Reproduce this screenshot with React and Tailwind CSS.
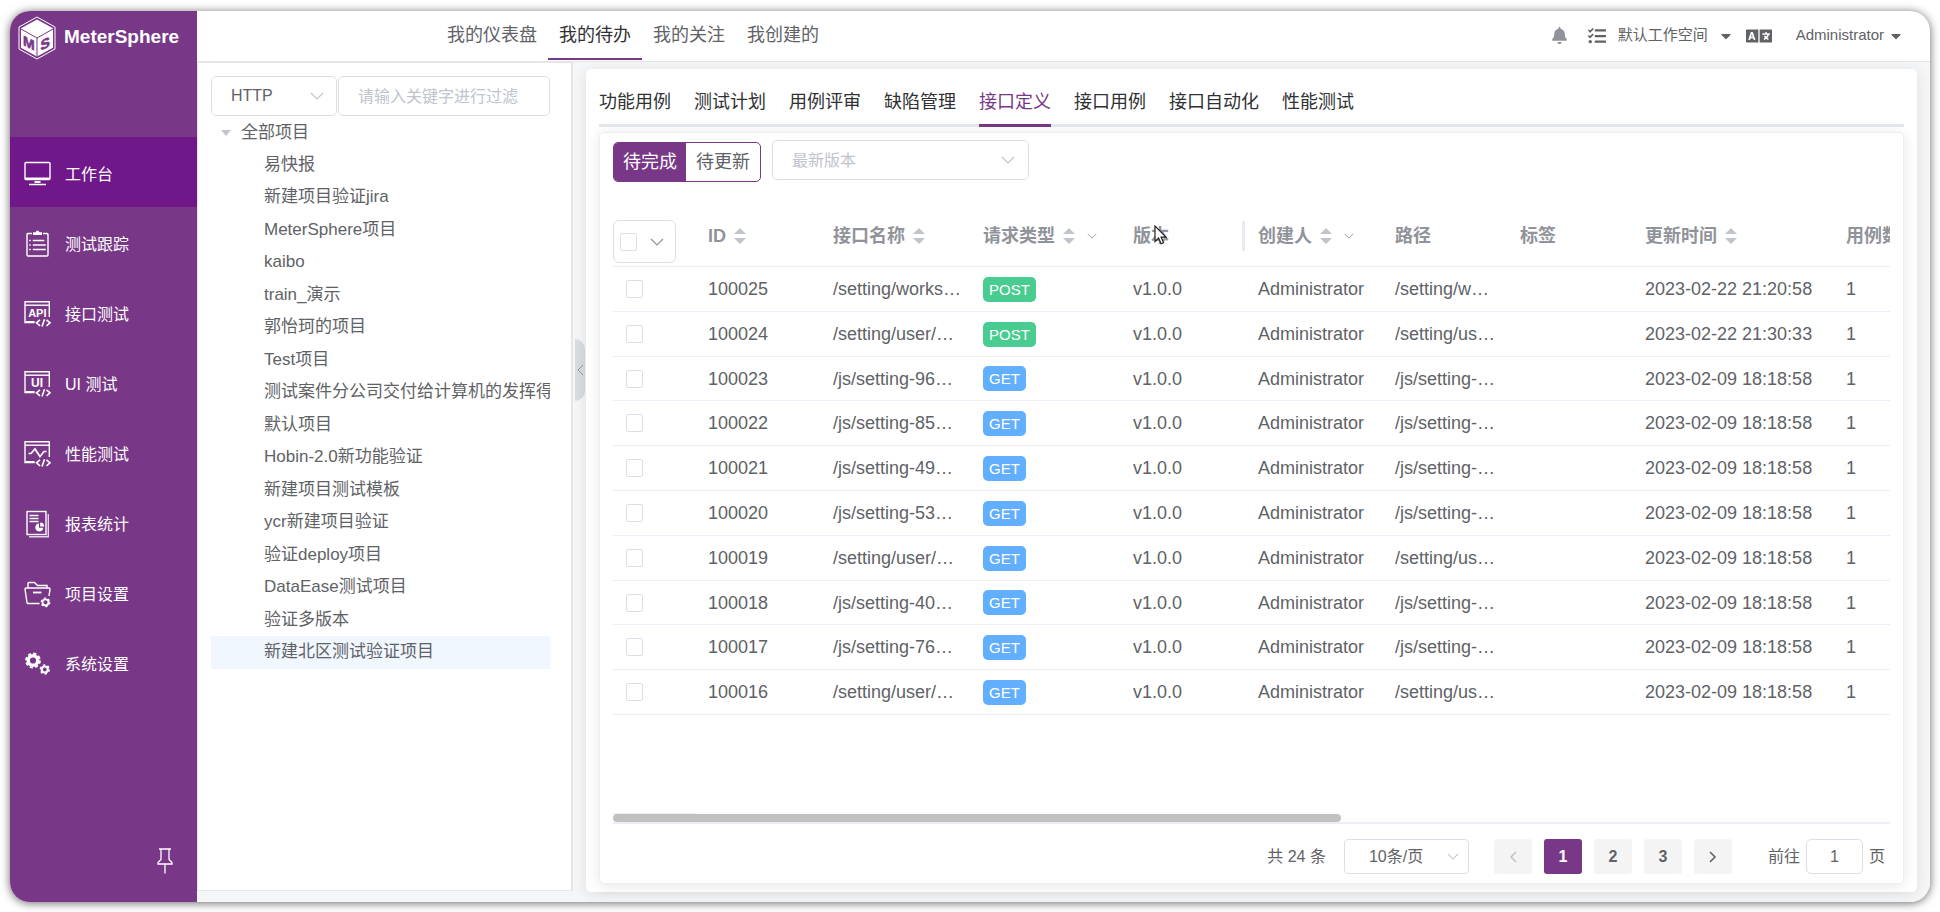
import React, { useState } from "react";
import { FaBell, FaTasks, FaLanguage, FaCaretDown } from "react-icons/fa";

const projects = [
  "易快报",
  "新建项目验证jira",
  "MeterSphere项目",
  "kaibo",
  "train_演示",
  "郭怡珂的项目",
  "Test项目",
  "测试案件分公司交付给计算机的发挥得很好",
  "默认项目",
  "Hobin-2.0新功能验证",
  "新建项目测试模板",
  "ycr新建项目验证",
  "验证deploy项目",
  "DataEase测试项目",
  "验证多版本",
  "新建北区测试验证项目",
];

const rows = [
  { id: "100025", name: "/setting/works…", method: "POST", path: "/setting/w…", time: "2023-02-22 21:20:58" },
  { id: "100024", name: "/setting/user/…", method: "POST", path: "/setting/us…", time: "2023-02-22 21:30:33" },
  { id: "100023", name: "/js/setting-96…", method: "GET", path: "/js/setting-…", time: "2023-02-09 18:18:58" },
  { id: "100022", name: "/js/setting-85…", method: "GET", path: "/js/setting-…", time: "2023-02-09 18:18:58" },
  { id: "100021", name: "/js/setting-49…", method: "GET", path: "/js/setting-…", time: "2023-02-09 18:18:58" },
  { id: "100020", name: "/js/setting-53…", method: "GET", path: "/js/setting-…", time: "2023-02-09 18:18:58" },
  { id: "100019", name: "/setting/user/…", method: "GET", path: "/setting/us…", time: "2023-02-09 18:18:58" },
  { id: "100018", name: "/js/setting-40…", method: "GET", path: "/js/setting-…", time: "2023-02-09 18:18:58" },
  { id: "100017", name: "/js/setting-76…", method: "GET", path: "/js/setting-…", time: "2023-02-09 18:18:58" },
  { id: "100016", name: "/setting/user/…", method: "GET", path: "/setting/us…", time: "2023-02-09 18:18:58" },
];

const methodColors = {
  POST: "bg-[#49cc90]",
  GET: "bg-[#61affe]",
};

/* ---------- icons ---------- */

function Icon({ children }) {
  return (
    <svg
      viewBox="0 0 28 28"
      className="h-7 w-7 shrink-0"
      fill="none"
      stroke="currentColor"
      strokeWidth="1.4"
      aria-hidden="true"
    >
      {children}
    </svg>
  );
}

const MonitorIcon = () => (
  <Icon>
    <rect x="2" y="2.5" width="25" height="17" rx="1" />
    <path d="M2 18.8h25" strokeWidth="2.4" />
    <path d="M11.5 22h6" strokeWidth="2" />
    <path d="M6 24.5h17" />
  </Icon>
);

const ClipboardIcon = () => (
  <Icon>
    <path d="M9 3.5H5a1 1 0 0 0-1 1V25a1 1 0 0 0 1 1h19a1 1 0 0 0 1-1V4.5a1 1 0 0 0-1-1h-4" />
    <path d="M10 2.2h2.5L13.5.8h2l1 1.4H19V5h-9z" fill="currentColor" stroke="none" />
    <path d="M9.8 10.5h11.5M9.8 15h13M9.8 19.5h13M6.2 10.5h1.5M6.2 15h1.5M6.2 19.5h1.5" />
  </Icon>
);

function CodeWindow({ children }) {
  return (
    <Icon>
      <path d="M26.3 17V1.7H2V22.5h9.5" />
      <path d="M2 5.2h24.3" />
      <path d="M3 22h8.5" strokeWidth="2" />
      <path d="M17 19.8l-3.5 3 3.5 3M23.5 19.8l3.5 3-3.5 3M21.5 19.2l-2.5 7.2" strokeWidth="1.6" />
      {children}
    </Icon>
  );
}

const ApiIcon = () => (
  <CodeWindow>
    <text x="14.3" y="16.5" textAnchor="middle" fontSize="11" fontWeight="bold" fill="currentColor" stroke="none">
      API
    </text>
  </CodeWindow>
);

const UiIcon = () => (
  <CodeWindow>
    <text x="14" y="17" textAnchor="middle" fontSize="12" fontWeight="bold" fill="currentColor" stroke="none">
      UI
    </text>
  </CodeWindow>
);

const PerformanceIcon = () => (
  <CodeWindow>
    <path d="M5.5 13.5h2.5l4-4.5 5 7.5 4-5h2.5" strokeWidth="1.7" />
  </CodeWindow>
);

const ReportIcon = () => (
  <Icon>
    <rect x="4" y="1.5" width="19" height="23" />
    <path d="M25.3 4v22.8H6" opacity="0.8" />
    <path d="M6.5 5.5h9M6.5 8.5h9M6.5 11.5h9" strokeWidth="1.3" />
    <path d="M16 13.5a4 4 0 1 0 4.3 4.3H16z" fill="currentColor" stroke="none" />
    <path d="M17.2 12.6v4h4a4 4 0 0 0-4-4z" fill="currentColor" stroke="none" />
  </Icon>
);

const FolderIcon = () => (
  <Icon>
    <path d="M5 8V3.5a1 1 0 0 1 1-1h5.5l3 3H24V8" />
    <path d="M16.5 23.5H5a1 1 0 0 1-1-1L2 9a1 1 0 0 1 1-1h23a1 1 0 0 1 1 1l-1 7" />
    <path d="M10 12.5h8.5" strokeWidth="1.8" />
    <circle cx="22.5" cy="22.3" r="3" strokeWidth="1.8" />
    <circle cx="22.5" cy="22.3" r="4.2" strokeWidth="1.4" strokeDasharray="2.2 2.2" />
  </Icon>
);

const GearsIcon = () => (
  <Icon>
    <circle cx="10" cy="10.5" r="4.8" strokeWidth="3.4" />
    <circle cx="10" cy="10.5" r="7" strokeWidth="1.8" strokeDasharray="3.3 2.2" />
    <circle cx="21.8" cy="19.5" r="3" strokeWidth="2.2" />
    <circle cx="21.8" cy="19.5" r="4.5" strokeWidth="1.4" strokeDasharray="2.35 2.35" />
  </Icon>
);

function Logo() {
  return (
    <svg viewBox="0 0 38 44" className="h-11 w-[38px] shrink-0" aria-hidden="true">
      <path d="M19 1L37 11V33L19 43L1 33V11Z" fill="none" stroke="#fff" strokeWidth="1" />
      <path d="M19 3.5L35 12.3V31.7L19 40.5L3 31.7V12.3Z" fill="#fff" />
      <path d="M3 13L19 22L35 13M19 22V40.5" fill="none" stroke="#783887" strokeWidth="1" />
      <g fill="#783887" stroke="#783887" strokeWidth="0.6" fontSize="14" fontWeight="bold" textAnchor="middle">
        <text transform="matrix(1 0.5 0 1 10.8 32)">M</text>
        <text transform="matrix(1 -0.5 0 1 27.2 32.5)">S</text>
      </g>
    </svg>
  );
}

function Chevron({ className }) {
  return (
    <svg viewBox="0 0 14 8" className={className} fill="none" stroke="currentColor" strokeWidth="1.2" aria-hidden="true">
      <path d="M1 1l6 6 6-6" />
    </svg>
  );
}

function SortCaret() {
  return (
    <svg viewBox="0 0 12 16" className="h-4 w-3 shrink-0" fill="#c0c4cc" aria-hidden="true">
      <path d="M6 0l6 6H0zM6 16l6-6H0z" />
    </svg>
  );
}

/* ---------- layout parts ---------- */

const menu = [
  { label: "工作台", icon: MonitorIcon },
  { label: "测试跟踪", icon: ClipboardIcon },
  { label: "接口测试", icon: ApiIcon },
  { label: "UI 测试", icon: UiIcon },
  { label: "性能测试", icon: PerformanceIcon },
  { label: "报表统计", icon: ReportIcon },
  { label: "项目设置", icon: FolderIcon },
  { label: "系统设置", icon: GearsIcon },
];

function Sidebar() {
  return (
    <aside className="flex w-[187px] shrink-0 flex-col bg-[#783887] text-white">
      <div className="flex h-[126px] items-start gap-2 pt-[5px] pl-2">
        <Logo />
        <span className="text-[19px] leading-[42px] font-bold">MeterSphere</span>
      </div>
      <nav aria-label="主菜单">
        {menu.map(({ label, icon: ItemIcon }, i) => (
          <a
            key={label}
            href="#"
            className={`flex h-[70px] items-center gap-3.5 pt-[3px] pl-[13px] text-base ${
              i === 0 ? "bg-[#70178a]" : ""
            }`}
          >
            <ItemIcon />
            <span className="pt-0.5">{label}</span>
          </a>
        ))}
      </nav>
      <button type="button" aria-label="固定菜单" className="mt-auto mr-6 mb-7 self-end">
        <svg viewBox="0 0 16 26" className="h-[26px] w-4" fill="none" stroke="currentColor" strokeWidth="1.3">
          <path d="M2 1h12M4 1v10.5L1 14.5v1.5h14v-1.5l-3-3V1M8 16v9.5" />
        </svg>
      </button>
    </aside>
  );
}

function Header() {
  const links = ["我的仪表盘", "我的待办", "我的关注", "我创建的"];
  return (
    <header className="flex h-[51px] shrink-0 items-stretch justify-between border-b border-[#e6e6e6] pr-[26px] pl-[239px]">
      <nav className="flex text-lg leading-[49px] text-[#606266]" aria-label="工作台">
        {links.map((link) => (
          <a
            key={link}
            href="#"
            className={`h-[49px] px-[11px] ${
              link === "我的待办" ? "border-b-2 border-[#783887] text-[#303133]" : ""
            }`}
          >
            {link}
          </a>
        ))}
      </nav>
      <div className="flex h-[49px] items-center text-[15px] text-[#606266]">
        <button type="button" aria-label="通知" className="mr-5 text-[#909399]">
          <FaBell size={17} />
        </button>
        <button type="button" aria-label="任务" className="mr-3">
          <FaTasks size={18} />
        </button>
        <button type="button" className="flex items-center gap-2.5">
          默认工作空间
          <FaCaretDown size={16} />
        </button>
        <button type="button" aria-label="语言" className="mr-6 ml-3">
          <FaLanguage size={26} />
        </button>
        <button type="button" className="flex items-center gap-1">
          Administrator
          <FaCaretDown size={16} />
        </button>
      </div>
    </header>
  );
}

function ProjectPanel() {
  return (
    <section
      aria-label="项目列表"
      className="mb-[11px] w-[376px] shrink-0 border border-r-2 border-[#e4e6e9] bg-white pt-[13px] pr-[21px] pl-[13px]"
    >
      <div className="flex gap-px">
        <div className="relative w-[126px] shrink-0">
          <select
            aria-label="协议"
            className="h-10 w-full appearance-none rounded-[5px] border border-[#dcdfe6] bg-white pl-[19px] text-base text-[#606266]"
          >
            <option>HTTP</option>
          </select>
          <Chevron className="pointer-events-none absolute top-4 right-[13px] h-2 w-3.5 text-[#c0c4cc]" />
        </div>
        <input
          type="text"
          aria-label="过滤项目"
          placeholder="请输入关键字进行过滤"
          className="h-10 w-full min-w-0 rounded-[5px] border border-[#dcdfe6] px-[19px] pt-0.5 text-base text-[#606266] placeholder:text-[#c0c4cc]"
        />
      </div>
      <div className="text-[17px] text-[#606266]">
        <div className="flex h-[33px] items-center gap-2.5 pl-2.5">
          <svg viewBox="0 0 10 6" className="h-1.5 w-2.5" fill="#c0c4cc" aria-hidden="true">
            <path d="M0 0h10L5 6z" />
          </svg>
          全部项目
        </div>
        <ul>
          {projects.map((project, i) => (
            <li
              key={project}
              className={`h-8 overflow-hidden pl-[53px] leading-8 whitespace-nowrap even:h-[33px] ${
                i === projects.length - 1 ? "bg-[#f0f7ff]" : ""
              }`}
            >
              {project}
            </li>
          ))}
        </ul>
      </div>
    </section>
  );
}

function HeadCell({ label, sortable, filterable, children }) {
  return (
    <th scope="col" className="h-[62px] border-b border-[#ebeef5] pl-3 text-left font-bold whitespace-nowrap">
      <div className="flex items-center">
        {label}
        {sortable && (
          <button type="button" aria-label={`按${label}排序`} className="ml-2">
            <SortCaret />
          </button>
        )}
        {filterable && (
          <button type="button" aria-label={`筛选${label}`} className="ml-3">
            <Chevron className="h-1.5 w-2.5" />
          </button>
        )}
        {children}
      </div>
    </th>
  );
}

const checkboxClass =
  "block h-[18px] w-[17px] appearance-none rounded-[2px] border border-[#dcdfe6] bg-white checked:bg-[#783887]";

function ApiTable() {
  return (
    <div className="mt-[23px] min-h-0 flex-1 overflow-hidden">
      <table className="w-[1346px] table-fixed border-separate border-spacing-0 text-lg leading-6 text-[#606266]">
        <colgroup>
          <col className="w-[83px]" />
          <col className="w-[125px]" />
          <col className="w-[150px]" />
          <col className="w-[150px]" />
          <col className="w-[125px]" />
          <col className="w-[137px]" />
          <col className="w-[125px]" />
          <col className="w-[125px]" />
          <col className="w-[201px]" />
          <col className="w-[125px]" />
        </colgroup>
        <thead className="text-[#909399]">
          <tr>
            <th scope="col" className="border-b border-[#ebeef5] pb-[3px] align-bottom">
              <div className="flex h-[43px] w-[63px] items-center justify-between rounded-[6px] border border-[#dcdfe6] pr-[11px] pl-1.5">
                <input type="checkbox" aria-label="全选" className={checkboxClass} />
                <button type="button" aria-label="选择范围">
                  <Chevron className="h-2 w-3.5" />
                </button>
              </div>
            </th>
            <HeadCell label="ID" sortable />
            <HeadCell label="接口名称" sortable />
            <HeadCell label="请求类型" sortable filterable />
            <HeadCell label="版本">
              <span className="relative mr-px ml-auto h-[30px] w-[3px] bg-[#e8ebf3]">
                {/* pointer over the column title */}
                <svg viewBox="0 0 13 20" className="absolute top-1 right-[78px] h-5 w-[13px]" aria-hidden="true">
                  <path
                    d="M1 1v15.500l3.600-3.400 2.500 5.700 2.500-1.100-2.500-5.500h4.900z"
                    fill="#fff"
                    stroke="#222"
                    strokeWidth="1.2"
                  />
                </svg>
              </span>
            </HeadCell>
            <HeadCell label="创建人" sortable filterable />
            <HeadCell label="路径" />
            <HeadCell label="标签" />
            <HeadCell label="更新时间" sortable />
            <HeadCell label="用例数" sortable />
          </tr>
        </thead>
        <tbody>
          {rows.map((row) => (
            <tr
              key={row.id}
              className="h-[45px] [&:nth-child(5n+3)]:h-[44px] [&>td]:border-b [&>td]:border-[#ebeef5] [&>td]:pl-3 [&>td]:whitespace-nowrap"
            >
              <td>
                <input type="checkbox" aria-label={`选择 ${row.id}`} className={`ml-px ${checkboxClass}`} />
              </td>
              <td>{row.id}</td>
              <td>{row.name}</td>
              <td>
                <span
                  className={`block w-fit rounded-[5px] px-1.5 text-[15px] leading-[25px] text-white ${methodColors[row.method]}`}
                >
                  {row.method}
                </span>
              </td>
              <td>v1.0.0</td>
              <td>Administrator</td>
              <td>{row.path}</td>
              <td></td>
              <td>{row.time}</td>
              <td>1</td>
            </tr>
          ))}
        </tbody>
      </table>
    </div>
  );
}

const pagerButton = "flex h-[35px] w-[38px] items-center justify-center rounded-[3px] font-bold";

function Pagination() {
  const [page, setPage] = useState(1);
  return (
    <div className="flex items-center justify-end pt-[15px] pr-[5px] pb-[9px] text-base text-[#606266]">
      <span className="mr-[18px]">共 24 条</span>
      <div className="relative mr-[25px]">
        <select
          aria-label="每页条数"
          className="h-[35px] w-[125px] appearance-none rounded-[4px] border border-[#dcdfe6] bg-white pl-6"
        >
          <option>10条/页</option>
        </select>
        <Chevron className="pointer-events-none absolute top-3.5 right-2.5 h-[7px] w-3 text-[#c0c4cc]" />
      </div>
      <div className="flex gap-3">
        <button type="button" aria-label="上一页" className={`${pagerButton} bg-[#f4f4f5] text-[#c0c4cc]`}>
          <svg viewBox="0 0 8 12" className="h-3 w-2" fill="none" stroke="currentColor" strokeWidth="1.6">
            <path d="M7 1L2 6l5 5" />
          </svg>
        </button>
        {[1, 2, 3].map((n) => (
          <button
            key={n}
            type="button"
            onClick={() => setPage(n)}
            className={`${pagerButton} ${n === page ? "bg-[#783887] text-white" : "bg-[#f4f4f5]"}`}
          >
            {n}
          </button>
        ))}
        <button type="button" aria-label="下一页" className={`${pagerButton} bg-[#f4f4f5]`}>
          <svg viewBox="0 0 8 12" className="h-3 w-2" fill="none" stroke="currentColor" strokeWidth="1.6">
            <path d="M1 1l5 5-5 5" />
          </svg>
        </button>
      </div>
      <label className="ml-9 flex items-center gap-1.5">
        前往
        <input
          type="text"
          defaultValue="1"
          className="h-[35px] w-[57px] rounded-[5px] border border-[#dcdfe6] text-center"
        />
        页
      </label>
    </div>
  );
}

function TodoCard() {
  const tabs = ["功能用例", "测试计划", "用例评审", "缺陷管理", "接口定义", "接口用例", "接口自动化", "性能测试"];
  return (
    <main className="mt-[7px] mr-[13px] mb-2.5 flex min-w-0 flex-1 flex-col rounded-[5px] bg-white px-[13px] pb-2 shadow-[0_2px_14px_rgba(0,0,0,0.1)]">
      <nav className="flex gap-[23px] border-b-3 border-[#e4e7ed] text-lg leading-6 text-[#303133]" aria-label="待办类型">
        {tabs.map((tab) => (
          <a
            key={tab}
            href="#"
            className={`-mb-[3px] border-b-3 pt-[21px] pb-2.5 ${
              tab === "接口定义" ? "border-[#783887] text-[#783887]" : "border-transparent"
            }`}
          >
            {tab}
          </a>
        ))}
      </nav>
      <section className="mt-[5px] flex flex-1 flex-col rounded-[5px] border border-[#ebeef5] bg-white px-[13px] shadow-[0_2px_14px_rgba(0,0,0,0.1)]">
        <div className="flex items-start gap-[11px] pt-[7px]">
          <div className="mt-0.5 flex overflow-hidden rounded-[5px] border border-[#783887] text-lg leading-[36px]">
            <button type="button" className="h-[38px] bg-[#783887] px-[9px] text-white">
              待完成
            </button>
            <button type="button" className="h-[38px] px-[10px] text-[#606266]">
              待更新
            </button>
          </div>
          <div className="relative">
            <select
              aria-label="版本"
              className="h-10 w-[257px] appearance-none rounded-[5px] border border-[#dcdfe6] bg-white pt-0.5 pl-[19px] text-base text-[#c0c4cc]"
            >
              <option>最新版本</option>
            </select>
            <Chevron className="pointer-events-none absolute top-4 right-3.5 h-2 w-3.5 text-[#c0c4cc]" />
          </div>
        </div>
        <ApiTable />
        <div className="border-b-2 border-[#ebeef5]">
          <div className="h-px w-[83px] bg-[#ebeef5]"></div>
          <div className="h-2 w-[57%] rounded-[4px] bg-[#c1c1c1]"></div>
        </div>
        <Pagination />
      </section>
    </main>
  );
}

export default function App() {
  return (
    <div className="flex min-h-screen bg-white px-2.5 pt-[11px] pb-2.5 font-['Liberation_Sans','Noto_Sans_CJK_SC',sans-serif]">
      <div className="flex min-w-0 flex-1 overflow-hidden rounded-[20px] bg-white shadow-[0_1px_10px_rgba(0,0,0,0.6)]">
        <Sidebar />
        <div className="flex min-w-0 flex-1 flex-col">
          <Header />
          <div className="flex min-h-0 flex-1 bg-[#f5f6f7]">
            <ProjectPanel />
            <div className="w-[13px] shrink-0 pl-0.5">
              <button
                type="button"
                aria-label="收起项目列表"
                className="mt-[277px] flex h-[62px] w-2.5 items-center justify-center rounded-r-[10px] bg-[#d9dce1] text-[#909399]"
              >
                <svg viewBox="0 0 7 12" className="h-3 w-[7px]" fill="none" stroke="currentColor">
                  <path d="M6 1L1 6l5 5" />
                </svg>
              </button>
            </div>
            <TodoCard />
          </div>
        </div>
      </div>
    </div>
  );
}
